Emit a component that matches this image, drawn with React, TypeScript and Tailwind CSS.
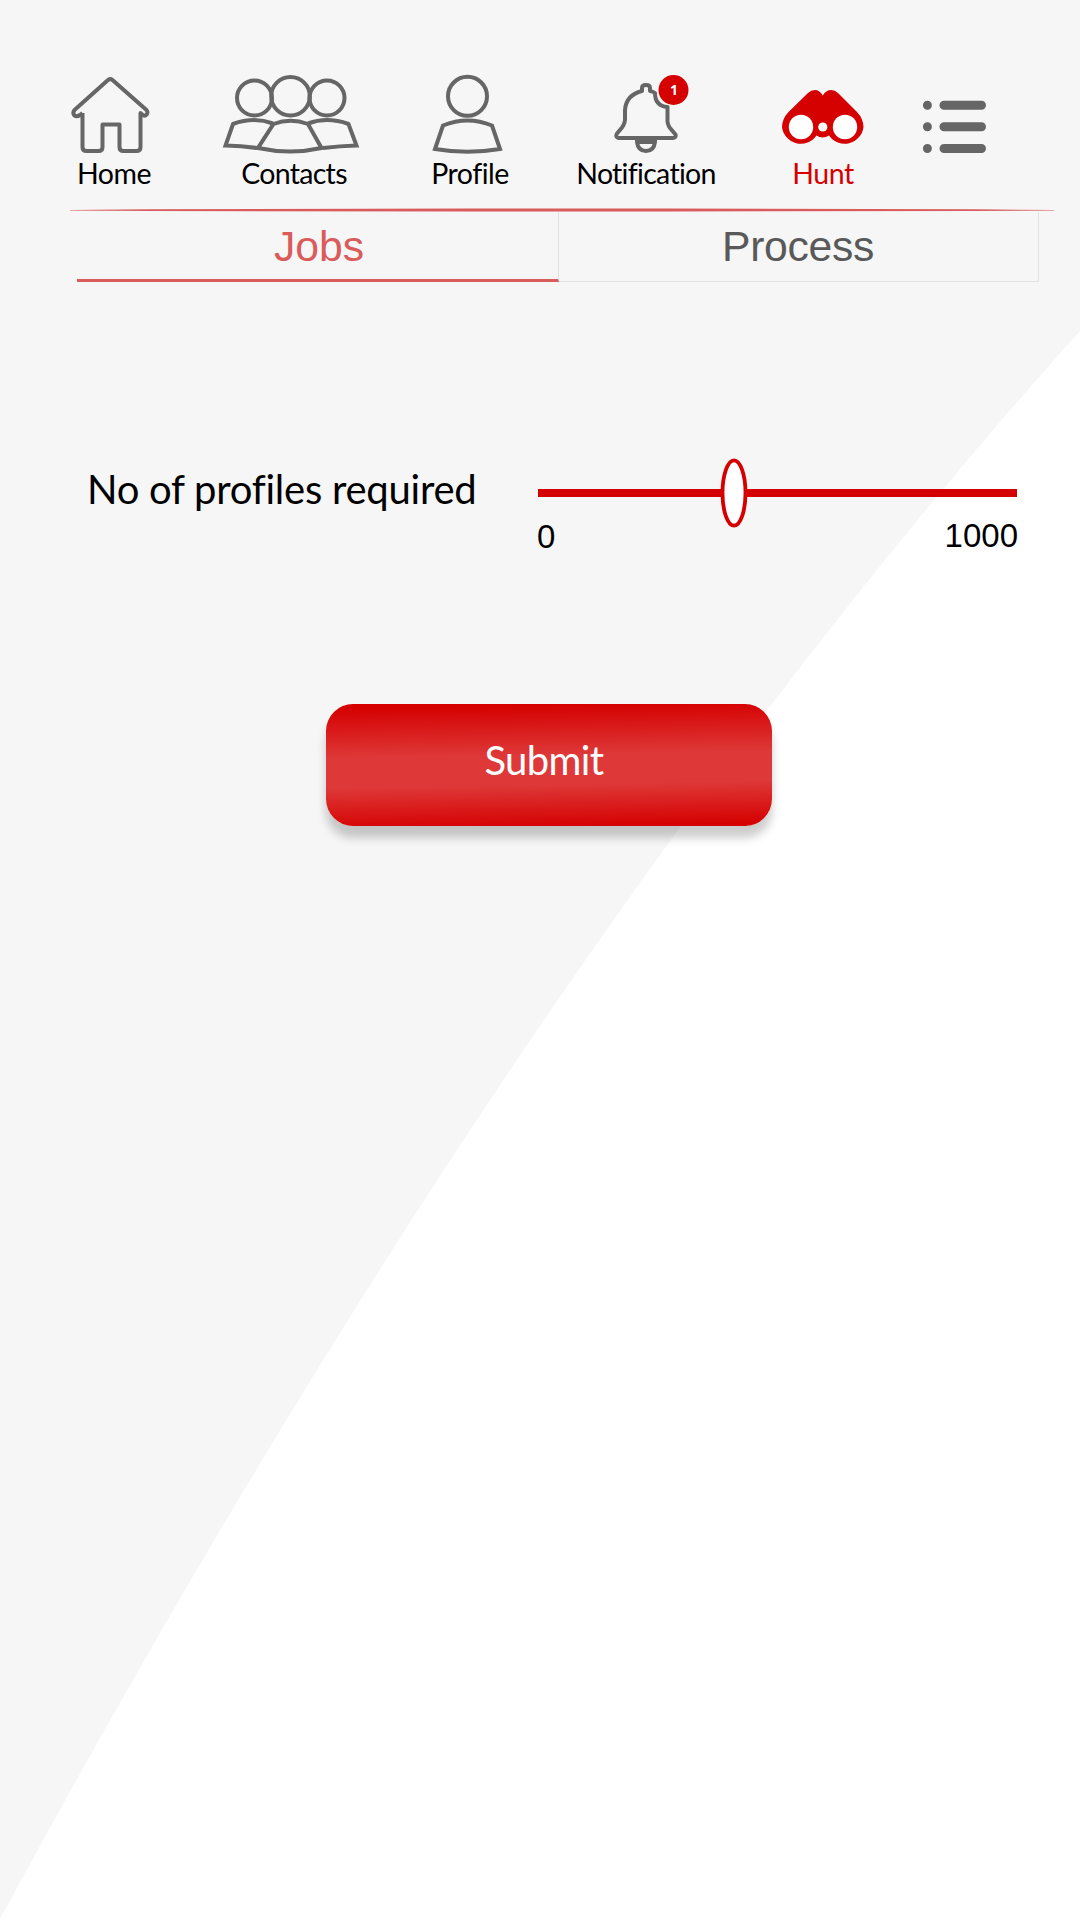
import React from "react";

type NavItemProps = {
  label?: string;
  className: string;
  labelClass?: string;
  viewBox: string;
  children: React.ReactNode;
};

function NavItem({ label, className, labelClass = "text-black", viewBox, children }: NavItemProps) {
  return (
    <a className={`flex shrink-0 flex-col items-center ${className}`}>
      <svg className="h-[90px] w-full shrink-0" viewBox={viewBox} fill="none" stroke="#666" strokeWidth="4">
        {children}
      </svg>
      {label && (
        <span className={`-mt-px whitespace-nowrap text-[28.5px] leading-[38px] ${labelClass}`}>{label}</span>
      )}
    </a>
  );
}

function Header() {
  return (
    <nav className="flex h-[143px] items-start pl-16">
      <NavItem label="Home" className="w-[100px]" labelClass="tracking-[-0.5px] text-black" viewBox="64 65 100 90">
        <path
          strokeLinejoin="round"
          d="M82.5 113V147Q82.5 151 86.500 151H98.500Q102.500 151 102.500 147V124.500H119.500V147Q119.500 151 123.500 151H136.500Q140.500 151 140.500 147V113L143 115.300Q145.500 116.500 147 114Q148 111.800 146.500 110L112.500 80Q110.300 78.300 108 80L74.500 110Q72.500 112.500 74 115Q76.500 117.500 80 115L82.500 113"
        />
      </NavItem>
      <NavItem label="Contacts" className="ml-[55px] w-[150px]" labelClass="tracking-[-0.7px] text-black" viewBox="219 65 150 90">
        <circle cx="254.500" cy="98" r="17.500" />
        <circle cx="290.500" cy="96.300" r="19.300" />
        <circle cx="327" cy="98" r="17.500" />
        <path d="M273 123.500Q254 116.500 233 124L225.500 145.500Q242 146 257 148M308 123.500Q327 116.500 348.500 124L356.500 145.500Q340 146 323 148" />
        <path d="M273.500 124Q290.500 117.500 308 124L321.500 148Q290.500 155 258 148Z" />
      </NavItem>
      <NavItem label="Profile" className="ml-[52px] w-[100px]" labelClass="-translate-x-px tracking-[-0.5px] text-black" viewBox="421 65 100 90">
        <circle cx="467.500" cy="96.300" r="19.500" />
        <path d="M443 125.500Q467.500 115.500 492 125.500L500 149Q467.500 154.500 435 149Z" />
      </NavItem>
      <NavItem label="Notification" className="ml-[50px] w-[150px]" labelClass="tracking-[-0.7px] text-black" viewBox="571 65 150 90">
        <path
          strokeLinejoin="round"
          d="M642 91V88Q642 85 646 85Q650 85 650 88V91Q653 91.500 655 93Q655 106 667.500 107V118Q667 124 670 128L675.500 134.500Q676.500 137.500 673 138H618.500Q615 137 617 133.500L622 127.500Q625.500 123 625 117V110Q626 95 642 91Z"
        />
        <path d="M637 139V142Q638 151 646 151Q654 151 655 142V139M637 142H655" />
        <circle cx="673.500" cy="90" r="15" fill="#d50000" stroke="none" />
      </NavItem>
      <span className="relative -left-[57px] top-[15px] -mr-5 w-5 text-center font-['Open_Sans'] text-[14px] font-bold leading-5 text-white">
        1
      </span>
      <NavItem label="Hunt" className="ml-[53px] w-[100px]" labelClass="-translate-x-px text-[#d50000] tracking-[-0.5px]" viewBox="774 65 100 90">
        <path
          fill="#d50000"
          stroke="none"
          d="M822.800 95.500Q826 90 831 90Q835 90 838 93L857 112Q863.500 119 863.500 127A19 19 0 0 1 829 135.500Q826 137.500 822.800 137.500Q819 137.500 816.500 135.500A19 19 0 0 1 782 127Q782 119 788.500 112L808 93Q811 90 815 90Q819.500 90 822.800 95.500Z"
        />
        <g fill="#fff" stroke="none">
          <circle cx="801" cy="127" r="12.200" />
          <circle cx="845" cy="127" r="12.200" />
          <circle cx="822.800" cy="127" r="4.600" />
        </g>
      </NavItem>
      <NavItem className="ml-[30px] w-[100px]" viewBox="904 65 100 90">
        <path strokeWidth="9" strokeLinecap="round" d="M927.400 105.200h.01M927.400 126.800h.01M927.400 148.500h.01M944 105.200h37.500M944 126.800h37.500M944 148.500h37.500" />
      </NavItem>
    </nav>
  );
}

export default function App() {
  return (
    <div className="relative isolate h-[1920px] w-[1080px] overflow-hidden bg-white font-['Lato','Open_Sans',sans-serif]">
      <svg className="absolute inset-0 -z-10 h-full w-full" viewBox="0 0 1080 1920">
        <path fill="#f6f6f6" d="M0 0H1080V331Q529 943 0 1919Z" />
      </svg>
      <div className="pt-[65px]">
        <Header />
        <svg className="ml-[70px] block h-1 w-[984px]" viewBox="0 0 984 4" preserveAspectRatio="none">
          <path fill="#d95b5b" d="M0 2L80 1.300L400 .5H600L904 1.300L984 2V2.500L904 3L600 3.500H400L80 3L0 2.500Z" />
        </svg>
        <div className="ml-[77px] flex h-[70px] w-[962px] font-['Liberation_Sans',sans-serif] text-[42.700px] leading-[68px]">
          <div className="w-[482px] border-b-[3px] border-r border-b-[#d95b5b] border-r-[#e0e0e0] pl-[197px] text-[#d95b5b]">Jobs</div>
          <div className="w-[480px] border-b border-r border-[#e2e2e2] pl-[163px] tracking-[-0.3px] text-[#595959]">Process</div>
        </div>

        <div className="mt-[177px] flex h-[110px] pl-[87px]">
          <label className="w-[451px] whitespace-nowrap text-[40px] leading-[60px] tracking-[-0.25px] text-black">
            No of profiles required
          </label>
          <div className="w-[479px]">
            <div className="relative mt-[30px] h-2 bg-[#d50000]">
              <svg className="absolute -top-[31px] left-[182px] h-[70px] w-7" viewBox="0 0 28 70">
                <ellipse cx="14" cy="35" rx="11.500" ry="32.600" fill="#fff" stroke="#d50000" strokeWidth="3.800" />
              </svg>
            </div>
            <div className="-ml-px mt-[19px] flex justify-between font-['Liberation_Sans',sans-serif] text-[33px] leading-[40px] -mr-px text-black">
              <span className="pt-px">0</span>
              <span>1000</span>
            </div>
          </div>
        </div>

        <button className="ml-[326px] mt-[135px] block h-[122px] w-[446px] rounded-[27px] bg-[linear-gradient(179deg,#d50000_3%,#de3838_42%,#de3838_65%,#d50000_98%)] pb-[10px] pr-[10px] text-[40px] leading-[60px] tracking-[-0.6px] text-white shadow-[0_12px_10px_rgba(0,0,0,0.2)]">
          Submit
        </button>
      </div>
    </div>
  );
}
